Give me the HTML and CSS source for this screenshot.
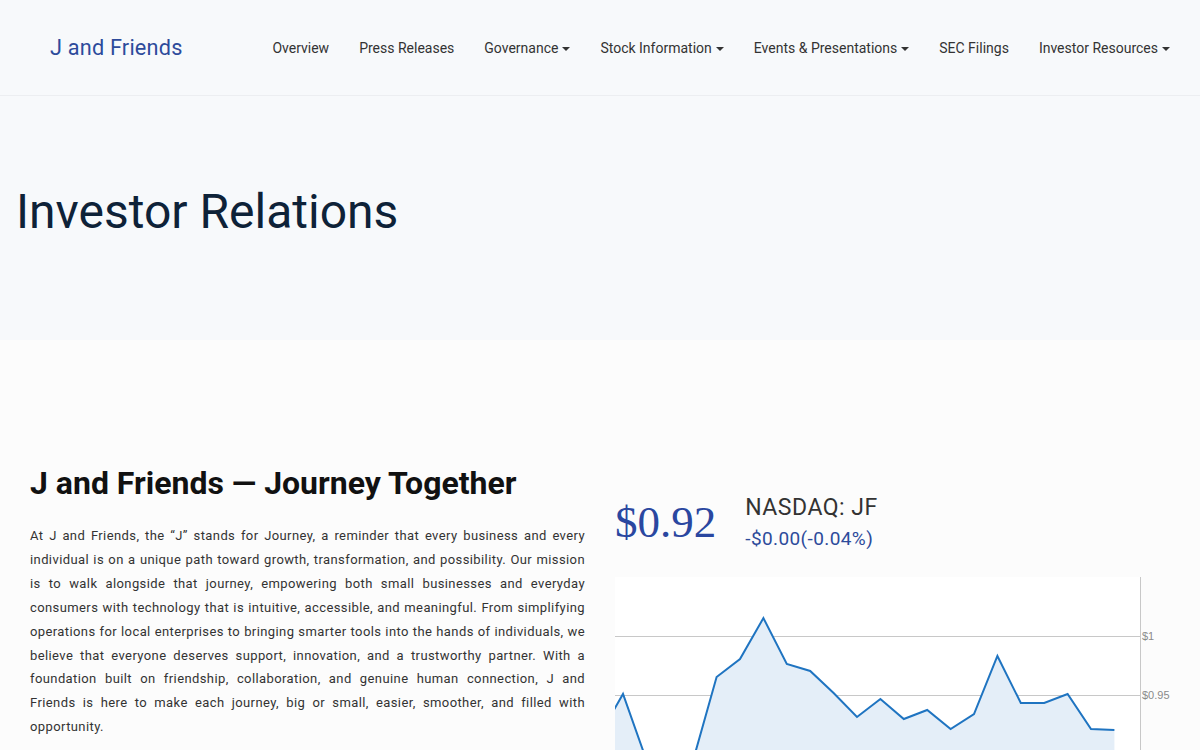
FILE: index.html
```html
<!DOCTYPE html>
<html lang="en">
<head>
<meta charset="utf-8">
<title>Investor Relations - J and Friends</title>
<link rel="stylesheet" href="styles.css">
</head>
<body>
<header class="site-header">
  <a class="logo" href="#">J and Friends</a>
  <nav class="nav">
    <a class="nav-item" href="#">Overview</a>
    <a class="nav-item" href="#">Press Releases</a>
    <a class="nav-item" href="#">Governance <span class="caret"></span></a>
    <a class="nav-item" href="#">Stock Information <span class="caret"></span></a>
    <a class="nav-item" href="#">Events &amp; Presentations <span class="caret"></span></a>
    <a class="nav-item" href="#">SEC Filings</a>
    <a class="nav-item" href="#">Investor Resources <span class="caret"></span></a>
  </nav>
</header>

<section class="hero">
  <h1 class="hero-title">Investor Relations</h1>
</section>

<main class="content">
  <div class="about">
    <h2 class="about-title">J and Friends — Journey Together</h2>
    <p class="about-text">At J and Friends, the “J” stands for Journey, a reminder that every business and every individual is on a unique path toward growth, transformation, and possibility. Our mission is to walk alongside that journey, empowering both small businesses and everyday consumers with technology that is intuitive, accessible, and meaningful. From simplifying operations for local enterprises to bringing smarter tools into the hands of individuals, we believe that everyone deserves support, innovation, and a trustworthy partner. With a foundation built on friendship, collaboration, and genuine human connection, J and Friends is here to make each journey, big or small, easier, smoother, and filled with opportunity.</p>
  </div>
  <div class="stock">
    <div class="quote">
      <div class="price">$0.92</div>
      <div class="quote-meta">
        <div class="ticker">NASDAQ: JF</div>
        <div class="change">-$0.00(-0.04%)</div>
      </div>
    </div>
    <svg class="chart" width="555" height="200" viewBox="0 0 555 200">
      <defs>
        <clipPath id="plot"><rect x="0" y="0" width="525" height="200"/></clipPath>
      </defs>
      <rect x="0" y="0" width="525" height="200" fill="#ffffff"/>
      <line x1="0" y1="59.5" x2="525" y2="59.5" stroke="#c8c8c8" stroke-width="1"/>
      <line x1="0" y1="118.5" x2="525" y2="118.5" stroke="#c8c8c8" stroke-width="1"/>
      <line x1="0" y1="177.5" x2="525" y2="177.5" stroke="#c8c8c8" stroke-width="1"/>
      <g clip-path="url(#plot)">
        <path fill="#e4eef8" d="M-15.4,158 L8,117 L31.4,183 L54.8,213 L78.2,183 L101.6,100 L125,82 L148.4,41 L171.8,87 L195.2,94 L218.6,116 L242,140 L265.4,122 L288.8,142 L312.2,133 L335.6,152 L359,137 L382.4,79 L405.8,126 L429.2,126 L452.6,117 L476,152 L499.4,153 L499.4,200 L-15.4,200 Z"/>
        <polyline fill="none" stroke="#1f74c1" stroke-width="2" stroke-linejoin="miter" points="-15.4,158 8,117 31.4,183 54.8,213 78.2,183 101.6,100 125,82 148.4,41 171.8,87 195.2,94 218.6,116 242,140 265.4,122 288.8,142 312.2,133 335.6,152 359,137 382.4,79 405.8,126 429.2,126 452.6,117 476,152 499.4,153"/>
      </g>
      <line x1="525.5" y1="0" x2="525.5" y2="200" stroke="#c8c8c8" stroke-width="1"/>
      <text class="axis-label" x="527" y="63">$1</text>
      <text class="axis-label" x="527" y="122">$0.95</text>
      <text class="axis-label" x="527" y="181">$0.90</text>
    </svg>
  </div>
</main>
</body>
</html>
```

FILE: styles.css
```css
* { box-sizing: border-box; }

html, body {
  margin: 0;
  padding: 0;
}

body {
  background: #fcfcfc;
  font-family: Roboto, "Liberation Sans", sans-serif;
  color: #333333;
  overflow: hidden;
}

a { text-decoration: none; }

.site-header {
  height: 96px;
  background: #f7f9fb;
  border-bottom: 1px solid #eceef1;
  display: flex;
  align-items: center;
  padding: 0 30px 0 50px;
}

.logo {
  font-size: 21.7px;
  color: #2d4b9b;
  letter-spacing: 0.2px;
}

.nav {
  margin-left: auto;
  display: flex;
  align-items: center;
  gap: 30px;
}

.nav-item {
  font-size: 14px;
  color: #333333;
  display: flex;
  align-items: center;
  gap: 4px;
}

.caret {
  display: inline-block;
  width: 0;
  height: 0;
  border-left: 4px solid transparent;
  border-right: 4px solid transparent;
  border-top: 4px solid #333333;
  margin-top: 2px;
}

.hero {
  height: 244px;
  background: #f7f9fb;
  display: flex;
  align-items: center;
  padding: 0 16px;
}

.hero-title {
  margin: 0;
  font-weight: 400;
  font-size: 48px;
  color: #0e2238;
  margin-top: -13px;
}

.content {
  display: flex;
  gap: 30px;
  padding: 120px 30px 0 30px;
}

.about {
  width: 555px;
  flex: none;
}

.about-title {
  margin: 0;
  font-size: 32px;
  font-weight: 700;
  color: #111111;
  line-height: 46px;
}

.about-text {
  margin: 18px 0 0 0;
  font-size: 13px;
  letter-spacing: 0.4px;
  line-height: 23.9px;
  text-align: justify;
  color: #333333;
}

.stock {
  width: 555px;
  flex: none;
  padding-top: 29px;
}

.quote {
  display: flex;
  align-items: flex-start;
  gap: 29px;
}

.price {
  font-family: "Liberation Serif", "Times New Roman", serif;
  font-size: 45px;
  color: #2a47a0;
  line-height: 1;
  margin-top: 11px;
}

.quote-meta {
  display: flex;
  flex-direction: column;
  margin-top: 4px;
}

.ticker {
  font-size: 23px;
  letter-spacing: 0.5px;
  color: #333333;
  line-height: 30px;
}

.change {
  font-size: 19px;
  letter-spacing: 0.4px;
  color: #2d4b9b;
  line-height: 30px;
  margin-top: 1px;
}

.chart {
  display: block;
  margin-top: 23px;
}

.axis-label {
  font-family: "Liberation Sans", Arial, sans-serif;
  font-size: 11px;
  fill: #8a8a8a;
}
```
